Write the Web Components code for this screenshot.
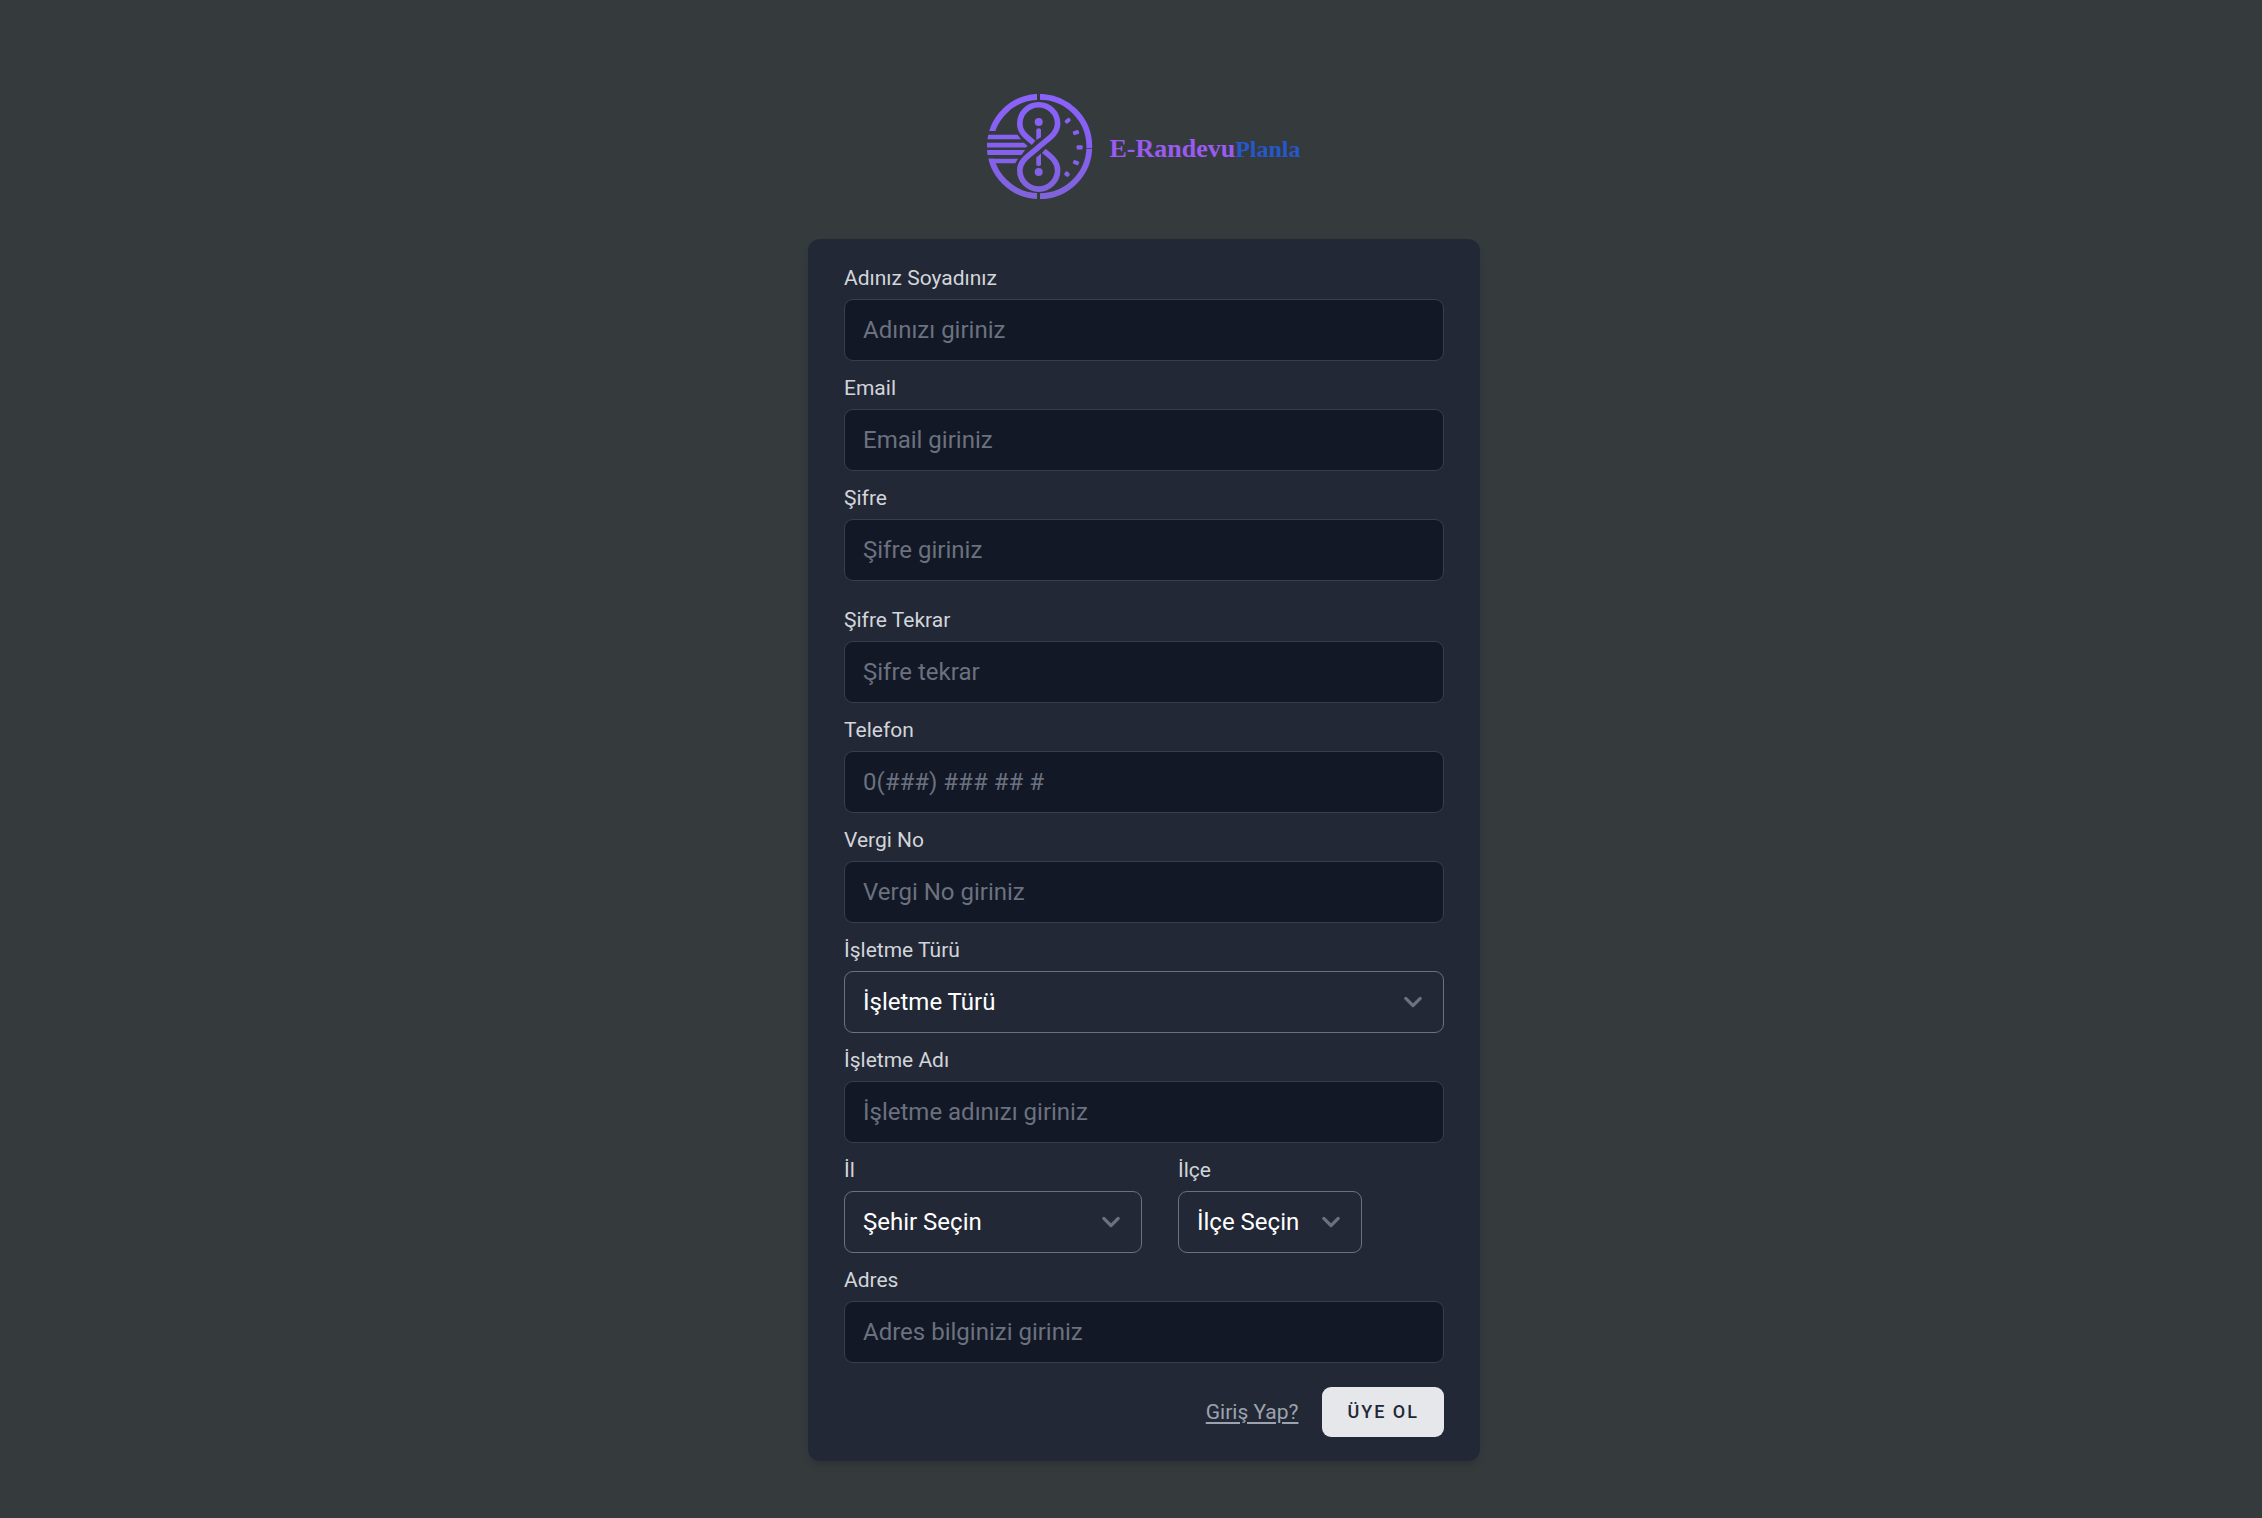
<!DOCTYPE html>
<html lang="tr">
<head>
    <meta charset="utf-8">
    <meta name="viewport" content="width=device-width, initial-scale=1">
    <title>E-RandevuPlanla</title>
    <style>
        body {
            margin: 0;
            background: #353a3d;
            color: #d2d5da;
            font-family: Roboto, "Liberation Sans", sans-serif;
            font-size: 24px;
            line-height: 36px;
        }
    </style>
</head>
<body>
    <register-page>
        <brand-logo slot="logo"></brand-logo>
        <register-card>
            <text-field label="Adınız Soyadınız" name="name" placeholder="Adınızı giriniz"></text-field>
            <text-field label="Email" name="email" type="email" placeholder="Email giriniz"></text-field>
            <text-field label="Şifre" name="password" type="password" placeholder="Şifre giriniz"></text-field>
            <text-field class="spaced" label="Şifre Tekrar" name="password_confirmation" type="password" placeholder="Şifre tekrar"></text-field>
            <text-field label="Telefon" name="phone" type="tel" placeholder="0(###) ### ## #"></text-field>
            <text-field label="Vergi No" name="tax_no" placeholder="Vergi No giriniz"></text-field>
            <select-field label="İşletme Türü" name="business_type" option="İşletme Türü"></select-field>
            <text-field label="İşletme Adı" name="business_name" placeholder="İşletme adınızı giriniz"></text-field>
            <field-row>
                <select-field class="city" label="İl" name="city" option="Şehir Seçin"></select-field>
                <select-field class="district" label="İlçe" name="district" option="İlçe Seçin"></select-field>
            </field-row>
            <text-field label="Adres" name="address" placeholder="Adres bilginizi giriniz"></text-field>
            <text-link slot="actions" href="#login">Giriş Yap?</text-link>
            <submit-button slot="actions">ÜYE OL</submit-button>
        </register-card>
    </register-page>

    <script>
        class RegisterPage extends HTMLElement {
            constructor() {
                super();
                this.attachShadow({mode: 'open'});
                this.shadowRoot.innerHTML = `
                    <style>
                        :host {
                            display: flex;
                            flex-direction: column;
                            align-items: center;
                            gap: 39px;
                            box-sizing: border-box;
                            min-height: 100vh;
                            padding: 94px 0 48px 26px;
                        }
                        main {
                            width: 100%;
                            max-width: 672px;
                        }
                    </style>
                    <slot name="logo"></slot>
                    <main><slot></slot></main>
                `;
            }
        }

        class BrandLogo extends HTMLElement {
            constructor() {
                super();
                this.attachShadow({mode: 'open'});
                this.shadowRoot.innerHTML = `
                    <style>
                        :host {
                            display: flex;
                            align-items: center;
                            gap: 16px;
                            font-family: "Liberation Serif", serif;
                            font-weight: 700;
                        }
                        svg {
                            display: block;
                            width: 106px;
                            height: 106px;
                        }
                        div {
                            padding-top: 3px;
                        }
                        .first {
                            color: #9a5bf0;
                            font-size: 26px;
                        }
                        .second {
                            color: #2558c9;
                            font-size: 24px;
                        }
                    </style>
                    <svg viewBox="0 0 106 106" aria-hidden="true">
                        <defs>
                            <linearGradient id="violet" gradientUnits="userSpaceOnUse" x1="0" y1="0" x2="0" y2="106">
                                <stop offset="0" stop-color="#8a63fb"/>
                                <stop offset="0.5" stop-color="#8560f0"/>
                                <stop offset="1" stop-color="#8063d8"/>
                            </linearGradient>
                            <clipPath id="ring">
                                <path d="M-1-1H50V37H-1ZM-1 64.7H50V107H-1ZM53-1H107V54H53ZM53 54.7H107V107H53Z"/>
                            </clipPath>
                        </defs>
                        <circle cx="52.6" cy="52.5" r="49.7" fill="none" stroke="url(#violet)" stroke-width="5.8" clip-path="url(#ring)"/>
                        <g fill="url(#violet)">
                            <path d="M1.2 40.7H30.5L34 45.3H.5Z"/>
                            <path d="M0 48.7H37L40.6 52L39 53.5H0Z"/>
                            <path d="M0 56H38.2L34.4 61H.5Z"/>
                            <path d="M1.4 64.7H31L28.2 69.3H7Z"/>
                            <circle cx="51.7" cy="28" r="4"/>
                            <path d="M49.3 35.5Q51.7 33.2 54 35.5V43.2L49.3 46Z"/>
                            <path d="M54 71Q51.7 73.3 49.3 71V63.4L54 59.6Z"/>
                            <circle cx="51.7" cy="78" r="4"/>
                            <rect x="77.7" y="24.7" width="6" height="4" rx="1.4" transform="rotate(-40 80.7 26.7)"/>
                            <rect x="86" y="36.6" width="6" height="4" rx="1" transform="rotate(-18 89 38.6)"/>
                            <rect x="89.6" y="51.2" width="6" height="4.2" rx="1"/>
                            <rect x="86" y="66.6" width="6" height="4" rx="1" transform="rotate(20 89 68.6)"/>
                            <rect x="77.4" y="77.8" width="5.4" height="4.6" rx="2" transform="rotate(40 80 80)"/>
                        </g>
                        <path d="M46.6 48.8C40 43 32.8 39 32.8 29.6A18.9 18.9 0 0 1 70.6 29.6C70.6 40 60.5 45 51.7 53C43 61 32.8 66 32.8 76.2A18.9 18.9 0 0 0 70.6 76.2C70.6 67 63.5 62.5 56.8 56.8" fill="none" stroke="url(#violet)" stroke-width="5.6"/>
                    </svg>
                    <div><span class="first">E-Randevu</span><span class="second">Planla</span></div>
                `;
            }
        }

        class RegisterCard extends HTMLElement {
            constructor() {
                super();
                this.attachShadow({mode: 'open'});
                this.shadowRoot.innerHTML = `
                    <style>
                        :host {
                            display: block;
                            padding: 24px 36px;
                            border-radius: 12px;
                            background: #222836;
                            box-shadow: 0 6px 9px -2px rgba(0, 0, 0, 0.1), 0 3px 6px -3px rgba(0, 0, 0, 0.1);
                        }
                        form {
                            display: flex;
                            flex-direction: column;
                            gap: 12px;
                        }
                        ::slotted(.spaced) {
                            margin-top: 12px;
                        }
                        footer {
                            display: flex;
                            align-items: center;
                            justify-content: flex-end;
                            gap: 24px;
                            margin-top: 12px;
                        }
                    </style>
                    <form>
                        <slot></slot>
                        <footer><slot name="actions"></slot></footer>
                    </form>
                `;
            }
        }

        class FieldRow extends HTMLElement {
            constructor() {
                super();
                this.attachShadow({mode: 'open'});
                this.shadowRoot.innerHTML = `
                    <style>
                        :host {
                            display: flex;
                            gap: 36px;
                        }
                        ::slotted(.city) {
                            flex: 0 1 298px;
                        }
                        ::slotted(.district) {
                            flex: 0 1 184px;
                        }
                    </style>
                    <slot></slot>
                `;
            }
        }

        // shared by text-field and select-field
        const fieldStyle = `
            :host {
                display: flex;
                flex-direction: column;
                gap: 6px;
            }
            label {
                font-size: 21px;
                font-weight: 400;
                line-height: 30px;
            }
            input, select {
                box-sizing: border-box;
                width: 100%;
                height: 62px;
                margin: 0;
                padding: 12px 18px;
                border: 1px solid #373e4c;
                border-radius: 9px;
                background: #121826;
                color: #d2d5da;
                font: inherit;
            }
            input:focus, select:focus {
                outline: 2px solid #6366f1;
            }
        `;

        class TextField extends HTMLElement {
            constructor() {
                super();
                this.attachShadow({mode: 'open'});
                this.shadowRoot.innerHTML = `
                    <style>
                        ${fieldStyle}
                        input::placeholder {
                            color: #6b717e;
                            opacity: 1;
                        }
                    </style>
                    <label for="control"></label>
                    <input id="control">
                `;
            }

            connectedCallback() {
                const input = this.shadowRoot.querySelector('input');
                this.shadowRoot.querySelector('label').textContent = this.getAttribute('label');
                input.type = this.getAttribute('type') || 'text';
                input.name = this.getAttribute('name');
                input.placeholder = this.getAttribute('placeholder');
            }
        }

        class SelectField extends HTMLElement {
            constructor() {
                super();
                this.attachShadow({mode: 'open'});
                this.shadowRoot.innerHTML = `
                    <style>
                        ${fieldStyle}
                        select {
                            appearance: none;
                            padding-right: 56px;
                            border-color: #6b717e;
                            background: url("data:image/svg+xml,%3csvg xmlns='http://www.w3.org/2000/svg' fill='none' viewBox='0 0 20 20'%3e%3cpath stroke='%236b717e' stroke-linecap='round' stroke-linejoin='round' stroke-width='1.8' d='M6 8l4 4 4-4'/%3e%3c/svg%3e") right 12px center / 36px 36px no-repeat;
                            color: #fff;
                        }
                    </style>
                    <label for="control"></label>
                    <select id="control"><option></option></select>
                `;
            }

            connectedCallback() {
                this.shadowRoot.querySelector('label').textContent = this.getAttribute('label');
                this.shadowRoot.querySelector('select').name = this.getAttribute('name');
                this.shadowRoot.querySelector('option').textContent = this.getAttribute('option');
            }
        }

        class TextLink extends HTMLElement {
            constructor() {
                super();
                this.attachShadow({mode: 'open'});
                this.shadowRoot.innerHTML = `
                    <style>
                        :host {
                            display: block;
                            font-size: 21px;
                            line-height: 30px;
                        }
                        a {
                            color: #9da3ae;
                            text-decoration-thickness: 2px;
                            text-underline-offset: 3px;
                        }
                    </style>
                    <a><slot></slot></a>
                `;
            }

            connectedCallback() {
                this.shadowRoot.querySelector('a').href = this.getAttribute('href');
            }
        }

        class SubmitButton extends HTMLElement {
            constructor() {
                super();
                this.attachShadow({mode: 'open'});
                this.shadowRoot.innerHTML = `
                    <style>
                        :host {
                            display: block;
                        }
                        button {
                            display: block;
                            padding: 12px 24px;
                            border: 1px solid transparent;
                            border-radius: 9px;
                            background: #e5e7eb;
                            color: #222836;
                            font-family: inherit;
                            font-size: 18px;
                            font-weight: 500;
                            line-height: 24px;
                            letter-spacing: 2px;
                        }
                    </style>
                    <button type="button"><slot></slot></button>
                `;
            }
        }

        customElements.define('register-page', RegisterPage);
        customElements.define('brand-logo', BrandLogo);
        customElements.define('register-card', RegisterCard);
        customElements.define('field-row', FieldRow);
        customElements.define('text-field', TextField);
        customElements.define('select-field', SelectField);
        customElements.define('text-link', TextLink);
        customElements.define('submit-button', SubmitButton);
    </script>
</body>
</html>
